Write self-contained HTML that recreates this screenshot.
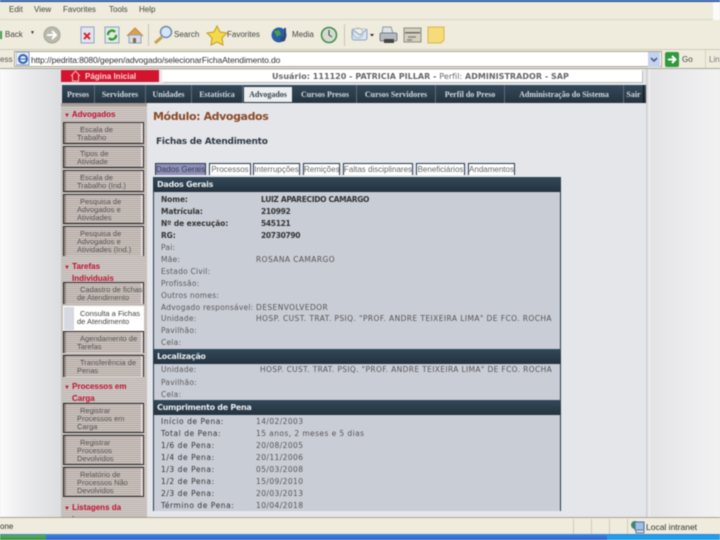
<!DOCTYPE html>
<html><head><meta charset="utf-8"><style>
html{background:#e6e7ea}
html,body{margin:0;padding:0;width:720px;height:540px;overflow:hidden}
body{position:relative;background:#e6e7ea;font-family:"Liberation Sans","DejaVu Sans",sans-serif;font-size:8px;color:#444;filter:blur(.4px)}
div,span.a,svg{position:absolute}
.t{white-space:nowrap}
.nav{top:85px;height:18px;line-height:19px;color:#d5dce2;font:bold 8px/19px "Liberation Serif",serif;text-align:center;border-right:1px solid #5d6d78}
.btn{left:63px;width:81px;border:1px solid #222;box-sizing:border-box;background:repeating-linear-gradient(#d6cdc9 0,#d6cdc9 1px,#ad a29d 1px,#ada29d 2px);background:repeating-linear-gradient(#d6cdc9 0,#d6cdc9 1px,#ada29d 1px,#ada29d 2px);color:#555;font-size:7.5px;line-height:8px;padding:3px 0 0 13px;box-shadow:inset 2px 0 0 #9a8c87, inset -2px 0 0 #e6dedb}
.btn i{font-style:normal;padding-left:3px}
.sec{left:64px;color:#c01030;font:bold 8px/9.5px "Liberation Sans",sans-serif;letter-spacing:0}
.l{left:161px;color:#333;font:bold 7.5px/12px "DejaVu Sans",sans-serif;letter-spacing:-.1px;white-space:nowrap}
.v{color:#555;white-space:nowrap;font:7.5px/12px "DejaVu Sans",sans-serif;letter-spacing:.42px}
.b{font-weight:bold;letter-spacing:-.32px;color:#333}
.n{font-weight:normal;color:#5a5a5a;letter-spacing:.23px}
.d{font-weight:normal;color:#333;letter-spacing:.55px}
.h{left:154px;width:407px;height:15px;background:linear-gradient(#33495a,#24323d);color:#e8ecef;font:bold 8px/15px "DejaVu Sans",sans-serif;text-indent:3px;letter-spacing:-.3px}
.tab{top:163px;height:11px;background:#fff;border:1px solid #24384f;border-bottom:0;box-sizing:content-box;font:8px/12px "Liberation Sans",sans-serif;color:#666;text-align:center;white-space:nowrap;overflow:hidden}
</style></head><body>

<!-- browser chrome -->
<div style="left:0;top:0;width:720px;height:2px;background:#2a5aa8"></div>
<div style="left:0;top:2px;width:720px;height:18px;background:#efecdd"></div>
<div style="left:0;top:19px;width:713px;height:1px;background:#d8d5c4"></div>
<div style="left:713px;top:2px;width:7px;height:18px;background:#fbfbf8"></div>
<div class="t" style="left:9px;top:5px;font-size:8px;color:#444">Edit</div>
<div class="t" style="left:34px;top:5px;color:#444">View</div>
<div class="t" style="left:63px;top:5px;color:#444">Favorites</div>
<div class="t" style="left:109px;top:5px;color:#444">Tools</div>
<div class="t" style="left:139px;top:5px;color:#444">Help</div>

<div style="left:0;top:20px;width:720px;height:30px;background:#efecdd"></div>
<div style="left:0;top:49px;width:720px;height:1px;background:#cfccbb"></div>
<div style="left:0;top:31px;width:2px;height:8px;background:#3c9a3e"></div>
<div class="t" style="left:5px;top:30px;color:#444">Back</div>
<div class="t" style="left:30px;top:30px;color:#333;font-size:5px">▼</div>
<svg style="left:40px;top:24px" width="680" height="26" viewBox="40 24 680 26">
 <circle cx="52" cy="35" r="8" fill="#b9b9ac" stroke="#a4a498"/>
 <path d="M47 35h9M52 31l4 4-4 4" stroke="#fff" stroke-width="2" fill="none"/>
 <rect x="81" y="27" width="13" height="16" fill="#dfe6f2" stroke="#8ea3c5"/>
 <path d="M84 33l6 6M90 33l-6 6" stroke="#d8282c" stroke-width="2"/>
 <rect x="105" y="27" width="14" height="16" fill="#dfe9dd" stroke="#8ea3c5"/>
 <path d="M108 35a4 4 0 0 1 7-3M116 35a4 4 0 0 1-7 3" stroke="#2a962e" stroke-width="2.2" fill="none"/>
 <path d="M127 36l8-8 8 8" fill="#d9a24c" stroke="#c8843a"/>
 <rect x="129" y="35" width="12" height="8" fill="#d6dde8" stroke="#93a1b8"/>
 <rect x="133" y="38" width="3" height="5" fill="#7d6a52"/>
 <line x1="148.500" y1="24" x2="148.500" y2="46" stroke="#c8c5b5"/>
 <circle cx="166" cy="32" r="5.500" fill="#d6e6f4" stroke="#6d8bb0" stroke-width="1.500"/>
 <path d="M162 37l-7 6" stroke="#c8a04c" stroke-width="3"/>
 <path d="M217 26l3 6 7 1-5 5 1 7-6-3-6 3 1-7-5-5 7-1z" fill="#f6d94a" stroke="#c49b24"/>
 <circle cx="279" cy="35" r="7.500" fill="#2a5ea6"/>
 <path d="M274 31l5-1 2 4-4 3z" fill="#4da04a"/>
 <path d="M285 28v10" stroke="#35447a" stroke-width="2"/>
 <circle cx="283" cy="39" r="2.500" fill="#35447a"/>
 <circle cx="329" cy="35" r="7.500" fill="#d3dccd" stroke="#3d8d46" stroke-width="1.500"/>
 <path d="M329 30v5l3 2" stroke="#345" fill="none"/>
 <line x1="344.500" y1="24" x2="344.500" y2="46" stroke="#c8c5b5"/>
 <rect x="352" y="29" width="15" height="11" rx="2" fill="#d8e4f0" stroke="#8ea3bd"/>
 <path d="M352 29l8 6 7-6" fill="#f3efe2" stroke="#8ea3bd"/>
 <circle cx="358" cy="33" r="5" fill="none" stroke="#a9c0d4"/>
 <path d="M370 34h4l-2 2.500z" fill="#222"/>
 <path d="M383 27h8l2 6h-11z" fill="#dfe3e8" stroke="#8f98a4"/>
 <rect x="380" y="33" width="17" height="8" rx="1.500" fill="#b5bac2" stroke="#777e88"/>
 <rect x="384" y="39" width="10" height="4" fill="#444"/>
 <rect x="404" y="28" width="17" height="14" fill="#d3d0c2" stroke="#8e8b7e"/>
 <rect x="405" y="32" width="15" height="1.500" fill="#6f6c62"/>
 <path d="M408 37h8M407 40h5" stroke="#8a877a" stroke-width="1.500"/>
 <path d="M428 27h16v13l-3 3h-13z" fill="#f6dc78" stroke="#d7b54c"/>
</svg>
<div class="t" style="left:174px;top:30px;color:#444">Search</div>
<div class="t" style="left:227px;top:30px;color:#444">Favorites</div>
<div class="t" style="left:292px;top:30px;color:#444">Media</div>

<div style="left:0;top:50px;width:720px;height:19px;background:#efecdd"></div>
<div class="t" style="left:0;top:55px;color:#555">ess</div>
<div style="left:14px;top:51px;height:16px;background:#fff;border:1px solid #a9a797;box-sizing:border-box;width:648px"></div>
<svg style="left:16px;top:52px" width="14" height="14"><rect x="0" y="0" width="13" height="13" fill="#e7eef8" stroke="#7d98c0"/><circle cx="7" cy="7" r="4" fill="none" stroke="#2c63b8" stroke-width="2"/><path d="M3 7h7" stroke="#2c63b8"/></svg>
<div class="t" style="left:31px;top:55px;font-size:8.500px;color:#333;letter-spacing:-.1px">http://pedrita:8080/gepen/advogado/selecionarFichaAtendimento.do</div>
<div style="left:648px;top:52px;width:12px;height:15px;background:#c3d2ee"></div>
<svg style="left:648px;top:52px" width="12" height="15"><path d="M3 6l3 3 3-3" stroke="#3a4f7c" stroke-width="1.500" fill="none"/></svg>
<div style="left:665px;top:52px;width:14px;height:15px;background:#2e9a3c;border-radius:2px"></div>
<svg style="left:665px;top:52px" width="14" height="15"><path d="M3 7.500h7M7 4l3.500 3.500L7 11" stroke="#fff" stroke-width="2" fill="none"/></svg>
<div class="t" style="left:682px;top:55px;color:#444">Go</div>
<div style="left:705px;top:50px;width:1px;height:18px;background:#d5d2c2"></div>
<div class="t" style="left:709px;top:55px;color:#777">Lin</div>
<div style="left:0;top:68px;width:720px;height:1px;background:#a9a797"></div>

<!-- page bg -->
<div style="left:0;top:69px;width:61px;height:448px;background:linear-gradient(90deg,#fbfbfb 0,#ececee 40%,#dcdde0 100%)"></div>
<div style="left:61px;top:69px;width:585px;height:448px;background:#e5e6ea"></div>
<div style="left:646px;top:69px;width:4px;height:448px;background:linear-gradient(90deg,#c9c9cc,#f8f8f8)"></div>
<div style="left:650px;top:69px;width:70px;height:448px;background:linear-gradient(90deg,#e4e4e7,#f2f2f3)"></div>

<!-- top header -->
<div style="left:61px;top:70px;width:98px;height:12px;background:#d2142e"></div>
<svg style="left:70px;top:70px" width="11" height="12"><path d="M1 6l4.500-5L10 6M2.500 5v6h6V5" stroke="#f0b8b0" fill="none"/></svg>
<div class="t" style="left:85px;top:71px;color:#f5d4d6;font:bold 8px/11px 'Liberation Sans',sans-serif;letter-spacing:0">Página Inicial</div>
<div style="left:162px;top:70px;width:480px;height:12px;background:#fff;box-shadow:1px 1px 0 #bbb"></div>
<div class="t" style="left:272px;top:71px;color:#666;font:bold 8px/11px 'DejaVu Sans',sans-serif;letter-spacing:.03px">Usuário: 111120 - PATRICIA PILLAR - <span style="font-weight:normal">Perfil:</span> ADMINISTRADOR - SAP</div>

<!-- nav -->
<div style="left:62px;top:85px;width:584px;height:18px;background:linear-gradient(#33495a,#24333e)"></div>
<div class="nav t" style="left:62px;width:32px">Presos</div>
<div class="nav t" style="left:95px;width:50px">Servidores</div>
<div class="nav t" style="left:146px;width:45px">Unidades</div>
<div class="nav t" style="left:192px;width:50px">Estatística</div>
<div style="left:244px;top:87px;width:48px;height:15px;background:#eceef0"></div>
<div class="t" style="left:244px;top:85px;width:48px;text-align:center;font:bold 8px/19px 'Liberation Serif',serif;color:#33424d">Advogados</div>
<div class="nav t" style="left:294px;width:62px">Cursos Presos</div>
<div class="nav t" style="left:357px;width:78px">Cursos Servidores</div>
<div class="nav t" style="left:436px;width:68px">Perfil do Preso</div>
<div class="nav t" style="left:505px;width:118px">Administração do Sistema</div>
<div class="nav t" style="left:624px;width:19px;border-right:1px solid #111">Sair</div>

<!-- sidebar -->
<div style="left:61px;top:103px;width:86px;height:414px;background:repeating-linear-gradient(#d6cfcb 0,#d6cfcb 1px,#b8b0ac 1px,#b8b0ac 2px);"></div>
<div style="left:61px;top:103px;width:86px;height:3px;background:#a99b95"></div>
<div class="sec" style="top:110px"><span style="font-size:6px">▼</span> Advogados</div>
<div class="btn" style="top:122px;height:22px"><i>Escala de</i><br>Trabalho</div>
<div class="btn" style="top:146px;height:22px"><i>Tipos de</i><br>Atividade</div>
<div class="btn" style="top:170px;height:22px"><i>Escala de</i><br>Trabalho (Ind.)</div>
<div class="btn" style="top:194px;height:30px"><i>Pesquisa de</i><br>Advogados e<br>Atividades</div>
<div class="btn" style="top:226px;height:30px;border-bottom:0"><i>Pesquisa de</i><br>Advogados e<br>Atividades (Ind.)</div>
<div class="sec" style="top:262px"><span style="font-size:6px">▼</span> Tarefas<br><span style="padding-left:8px">Individuais</span></div>
<div class="btn" style="top:282px;height:22px;border-bottom:0"><i>Cadastro de fichas</i><br>de Atendimento</div>
<div class="btn" style="top:306px;height:25px;background:#fff;color:#444;box-shadow:inset 10px 0 0 #d6d8e2;border-color:#fff"><i>Consulta a Fichas</i><br>de Atendimento</div>
<div class="btn" style="top:331px;height:22px;border-bottom:0"><i>Agendamento de</i><br>Tarefas</div>
<div class="btn" style="top:355px;height:22px;border-bottom:0"><i>Transferência de</i><br>Penas</div>
<div class="sec" style="top:382px"><span style="font-size:6px">▼</span> Processos em<br><span style="padding-left:8px">Carga</span></div>
<div class="btn" style="top:403px;height:30px"><i>Registrar</i><br>Processos em<br>Carga</div>
<div class="btn" style="top:435px;height:30px"><i>Registrar</i><br>Processos<br>Devolvidos</div>
<div class="btn" style="top:467px;height:30px"><i>Relatório de</i><br>Processos Não<br>Devolvidos</div>
<div class="sec" style="top:503px;height:14px;overflow:hidden"><span style="font-size:6px">▼</span> Listagens da<br><span style="padding-left:8px">human</span></div>

<!-- main -->
<div class="t" style="left:153px;top:110px;font:bold 11px/14px 'DejaVu Sans',sans-serif;color:#8c4a28;letter-spacing:-.4px">Módulo: Advogados</div>
<div class="t" style="left:156px;top:136px;font:bold 9px/13px 'DejaVu Sans',sans-serif;color:#2e3a46;letter-spacing:-.25px">Fichas de Atendimento</div>

<div class="tab" style="left:155px;width:49px;background:#8f90b6;color:#3a3a58">Dados Gerais</div>
<div class="tab" style="left:209px;width:40px">Processos</div>
<div class="tab" style="left:253px;width:45px">Interrupções</div>
<div class="tab" style="left:303px;width:35px">Remições</div>
<div class="tab" style="left:343px;width:68px">Faltas disciplinares</div>
<div class="tab" style="left:416px;width:47px">Beneficiários</div>
<div class="tab" style="left:468px;width:45px">Andamentos</div>

<div style="left:153px;top:177px;width:408px;height:334px;background:#c9cdd6;border-left:1px solid #24384f;border-right:1px solid #24384f;box-sizing:border-box"></div>
<div class="h" style="top:177px;height:15px">Dados Gerais</div>
<div class="l" style="top:194px">Nome:</div><div class="v b" style="left:261px;top:194px">LUIZ APARECIDO CAMARGO</div>
<div class="l" style="top:206px">Matrícula:</div><div class="v b" style="left:261px;top:206px">210992</div>
<div class="l" style="top:218px">Nº de execução:</div><div class="v b" style="left:261px;top:218px">545121</div>
<div class="l" style="top:230px">RG:</div><div class="v b" style="left:261px;top:230px">20730790</div>
<div class="l n" style="top:242px">Pai:</div>
<div class="l n" style="top:254px">Mãe:</div><div class="v" style="left:256px;top:254px">ROSANA CAMARGO</div>
<div class="l n" style="top:266px">Estado Civil:</div>
<div class="l n" style="top:278px">Profissão:</div>
<div class="l n" style="top:290px">Outros nomes:</div>
<div class="l n" style="top:302px">Advogado responsável:</div><div class="v" style="left:256px;top:302px">DESENVOLVEDOR</div>
<div class="l n" style="top:313px">Unidade:</div><div class="v" style="left:256px;top:313px">HOSP. CUST. TRAT. PSIQ. "PROF. ANDRE TEIXEIRA LIMA" DE FCO. ROCHA</div>
<div class="l n" style="top:325px">Pavilhão:</div>
<div class="l n" style="top:337px">Cela:</div>

<div class="h" style="top:349px;height:15px">Localização</div>
<div class="l n" style="top:364px">Unidade:</div><div class="v" style="left:260px;top:364px;letter-spacing:.36px">HOSP. CUST. TRAT. PSIQ. "PROF. ANDRE TEIXEIRA LIMA" DE FCO. ROCHA</div>
<div class="l n" style="top:377px">Pavilhão:</div>
<div class="l n" style="top:389px">Cela:</div>

<div class="h" style="top:400px;height:15px">Cumprimento de Pena</div>
<div class="l d" style="top:416px">Início de Pena:</div><div class="v" style="left:256px;top:416px">14/02/2003</div>
<div class="l d" style="top:428px">Total de Pena:</div><div class="v" style="left:256px;top:428px">15 anos, 2 meses e 5 dias</div>
<div class="l d" style="top:440px">1/6 de Pena:</div><div class="v" style="left:256px;top:440px">20/08/2005</div>
<div class="l d" style="top:452px">1/4 de Pena:</div><div class="v" style="left:256px;top:452px">20/11/2006</div>
<div class="l d" style="top:464px">1/3 de Pena:</div><div class="v" style="left:256px;top:464px">05/03/2008</div>
<div class="l d" style="top:476px">1/2 de Pena:</div><div class="v" style="left:256px;top:476px">15/09/2010</div>
<div class="l d" style="top:488px">2/3 de Pena:</div><div class="v" style="left:256px;top:488px">20/03/2013</div>
<div class="l d" style="top:500px">Término de Pena:</div><div class="v" style="left:256px;top:500px">10/04/2018</div>
<div style="left:153px;top:511px;width:408px;height:6px;background:#e5e6ea"></div>

<!-- status bar -->
<div style="left:0;top:517px;width:720px;height:1px;background:#a5a393"></div>
<div style="left:0;top:518px;width:720px;height:17px;background:#efecdd"></div>
<div class="t" style="left:0;top:522px;color:#333">one</div>
<div style="left:573px;top:519px;width:1px;height:15px;background:#cfccbb"></div>
<div style="left:591px;top:519px;width:1px;height:15px;background:#cfccbb"></div>
<div style="left:609px;top:519px;width:1px;height:15px;background:#cfccbb"></div>
<div style="left:627px;top:519px;width:1px;height:15px;background:#cfccbb"></div>
<svg style="left:630px;top:520px" width="15" height="14"><circle cx="5" cy="5" r="4" fill="#3d8a6a"/><rect x="5" y="2" width="9" height="8" fill="#9dc0e8" stroke="#4c6f9c"/><rect x="6" y="10" width="8" height="3" fill="#d5dce6" stroke="#6a7d96"/></svg>
<div class="t" style="left:646px;top:522px;font-size:8.500px;color:#333">Local intranet</div>

<!-- taskbar -->
<div style="left:0;top:534px;width:720px;height:6px;background:linear-gradient(#3d86e0,#2a66cc)"></div>
<div style="left:0;top:535px;width:46px;height:5px;background:linear-gradient(#5cad5a,#3d8f3f)"></div>
<div style="left:607px;top:535px;width:113px;height:5px;background:#1f9fe8"></div>
</body></html>
